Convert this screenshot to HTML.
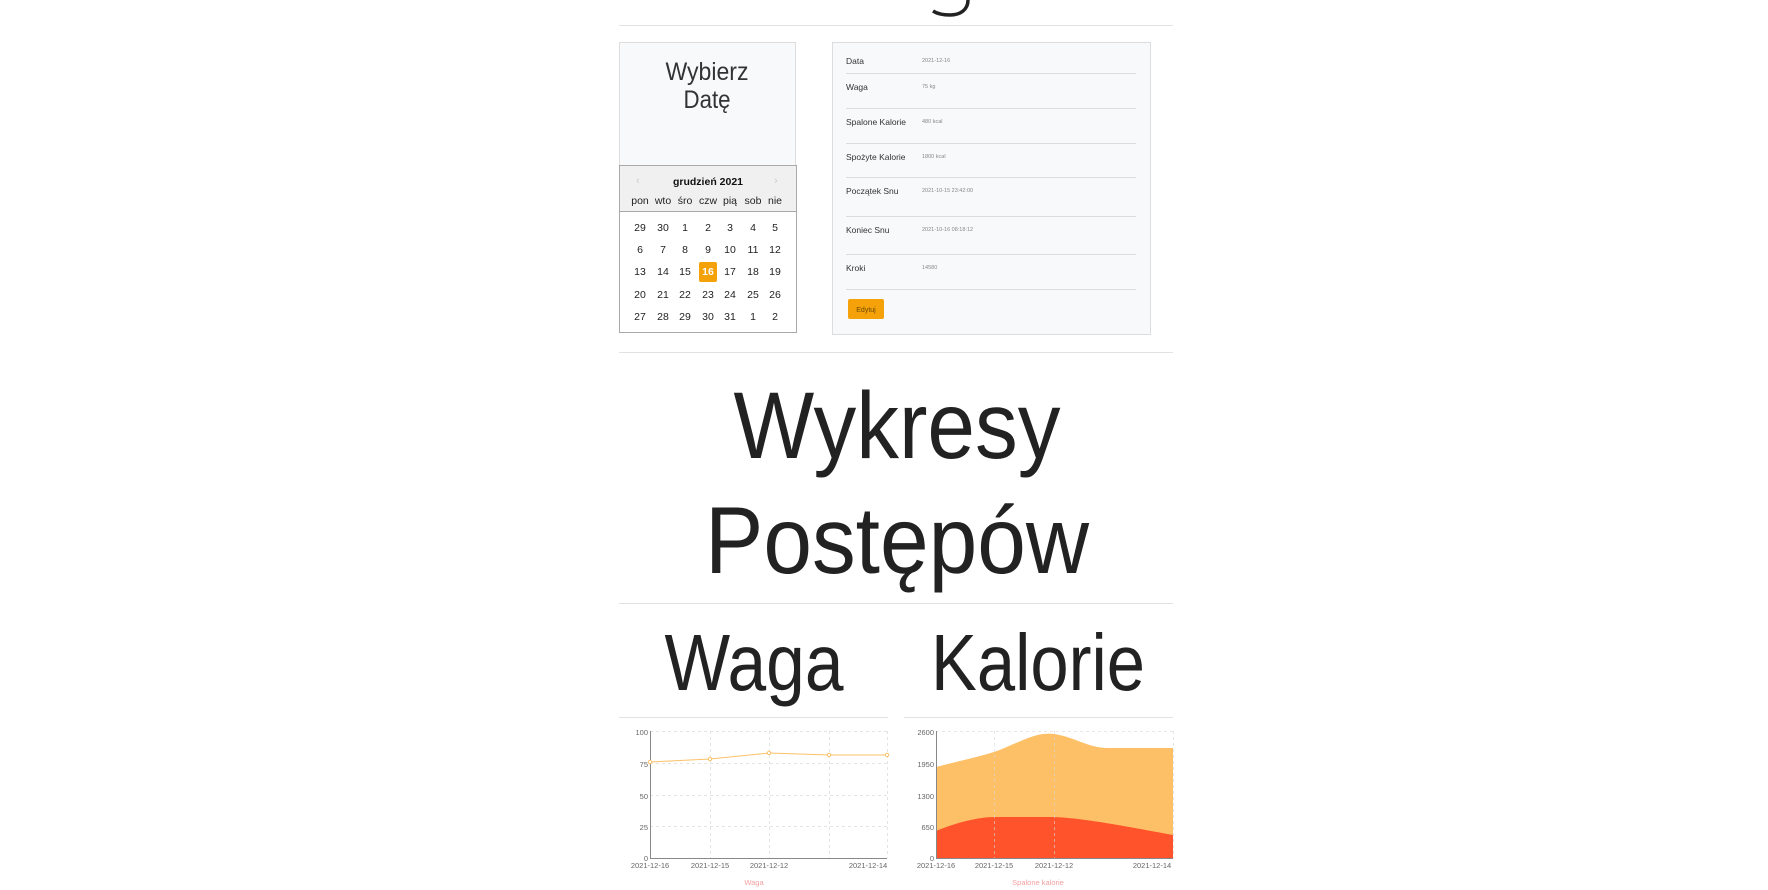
<!DOCTYPE html>
<html><head><meta charset="utf-8"><style>
html,body{margin:0;padding:0;background:#fff;width:1768px;height:890px;overflow:hidden}
svg{display:block}
text{font-family:"Liberation Sans",sans-serif}
</style></head><body>
<svg width="1768" height="890" viewBox="0 0 1768 890" xmlns="http://www.w3.org/2000/svg">
<path d="M968 0 C968 10 960 15 950 15 C942 15 936 13 933 11" fill="none" stroke="#222" stroke-width="3.5"/>
<line x1="619" y1="25.5" x2="1173" y2="25.5" stroke="#e2e2e2"/>

<!-- left picker box -->
<rect x="619.5" y="42.5" width="176" height="123" fill="#f8f9fa" stroke="#ddd"/>
<text x="707" y="80" font-size="25" fill="#333" text-anchor="middle" textLength="83" lengthAdjust="spacingAndGlyphs">Wybierz</text>
<text x="707" y="108" font-size="25" fill="#333" text-anchor="middle" textLength="47" lengthAdjust="spacingAndGlyphs">Datę</text>
<rect x="619.5" y="165.5" width="177" height="167" fill="#fff" stroke="#aaa"/>
<rect x="620" y="166" width="176" height="45" fill="#f0f0f0"/>
<line x1="620" y1="211.5" x2="796" y2="211.5" stroke="#aaa"/>
<text x="636" y="184" font-size="11" fill="#ccc">‹</text>
<text x="774" y="184" font-size="11" fill="#ccc">›</text>
<text x="708" y="185" font-size="10.5" font-weight="bold" fill="#111" text-anchor="middle">grudzień 2021</text>
<g font-size="10.5" fill="#222" text-anchor="middle">
<text x="640" y="204">pon</text><text x="663" y="204">wto</text><text x="685" y="204">śro</text><text x="708" y="204">czw</text><text x="730" y="204">pią</text><text x="753" y="204">sob</text><text x="775" y="204">nie</text>
</g>
<rect x="699" y="262" width="18" height="20" rx="2" fill="#f5a10a"/>
<g font-size="10.5" fill="#222" text-anchor="middle">
<text x="640" y="231">29</text><text x="663" y="231">30</text><text x="685" y="231">1</text><text x="708" y="231">2</text><text x="730" y="231">3</text><text x="753" y="231">4</text><text x="775" y="231">5</text>
<text x="640" y="253">6</text><text x="663" y="253">7</text><text x="685" y="253">8</text><text x="708" y="253">9</text><text x="730" y="253">10</text><text x="753" y="253">11</text><text x="775" y="253">12</text>
<text x="640" y="275">13</text><text x="663" y="275">14</text><text x="685" y="275">15</text><text x="708" y="275" fill="#fff" font-weight="bold">16</text><text x="730" y="275">17</text><text x="753" y="275">18</text><text x="775" y="275">19</text>
<text x="640" y="298">20</text><text x="663" y="298">21</text><text x="685" y="298">22</text><text x="708" y="298">23</text><text x="730" y="298">24</text><text x="753" y="298">25</text><text x="775" y="298">26</text>
<text x="640" y="320">27</text><text x="663" y="320">28</text><text x="685" y="320">29</text><text x="708" y="320">30</text><text x="730" y="320">31</text><text x="753" y="320">1</text><text x="775" y="320">2</text>
</g>

<!-- info card -->
<rect x="832.5" y="42.5" width="318" height="292" fill="#f8f9fa" stroke="#ddd"/>
<g stroke="#ddd"><line x1="846" y1="73.5" x2="1136" y2="73.5"/><line x1="846" y1="108.5" x2="1136" y2="108.5"/><line x1="846" y1="143.5" x2="1136" y2="143.5"/><line x1="846" y1="177.5" x2="1136" y2="177.5"/><line x1="846" y1="216.5" x2="1136" y2="216.5"/><line x1="846" y1="254.5" x2="1136" y2="254.5"/><line x1="846" y1="289.5" x2="1136" y2="289.5"/></g>
<g font-size="8.5" fill="#333">
<text x="846" y="64">Data</text><text x="846" y="90">Waga</text><text x="846" y="125">Spalone Kalorie</text><text x="846" y="160">Spożyte Kalorie</text><text x="846" y="194">Początek Snu</text><text x="846" y="233">Koniec Snu</text><text x="846" y="271">Kroki</text>
</g>
<g font-size="5.5" fill="#888">
<text x="922" y="62">2021-12-16</text><text x="922" y="88">75 kg</text><text x="922" y="123">480 kcal</text><text x="922" y="158">1800 kcal</text><text x="922" y="192">2021-10-15 23:42:00</text><text x="922" y="231">2021-10-16 08:18:12</text><text x="922" y="269">14580</text>
</g>
<rect x="848" y="299" width="36" height="20" rx="2" fill="#f5a10a"/>
<text x="866" y="312" font-size="7" fill="#6b4a00" text-anchor="middle">Edytuj</text>

<line x1="619" y1="352.5" x2="1173" y2="352.5" stroke="#e2e2e2"/>

<text x="897" y="458" font-size="95" fill="#222" text-anchor="middle" textLength="327" lengthAdjust="spacingAndGlyphs">Wykresy</text>
<text x="897" y="573" font-size="95" fill="#222" text-anchor="middle" textLength="384" lengthAdjust="spacingAndGlyphs">Postępów</text>
<line x1="619" y1="603.5" x2="1173" y2="603.5" stroke="#e2e2e2"/>

<text x="754" y="690" font-size="80" fill="#222" text-anchor="middle" textLength="179" lengthAdjust="spacingAndGlyphs">Waga</text>
<text x="1038" y="690" font-size="80" fill="#222" text-anchor="middle" textLength="214" lengthAdjust="spacingAndGlyphs">Kalorie</text>
<line x1="619" y1="717.5" x2="888" y2="717.5" stroke="#e2e2e2"/>
<line x1="904" y1="717.5" x2="1173" y2="717.5" stroke="#e2e2e2"/>

<!-- weight chart -->
<g stroke="#e4e4e4" stroke-dasharray="3,3">
<line x1="650" y1="731.5" x2="887" y2="731.5"/><line x1="650" y1="763.5" x2="887" y2="763.5"/><line x1="650" y1="795.5" x2="887" y2="795.5"/><line x1="650" y1="826.5" x2="887" y2="826.5"/>
<line x1="710.5" y1="731" x2="710.5" y2="858"/><line x1="769.5" y1="731" x2="769.5" y2="858"/><line x1="829.5" y1="731" x2="829.5" y2="858"/><line x1="887.5" y1="731" x2="887.5" y2="858"/>
</g>
<line x1="650.5" y1="731" x2="650.5" y2="858" stroke="#888"/>
<line x1="650" y1="858.5" x2="887" y2="858.5" stroke="#888"/>
<g font-size="7.5" fill="#666" text-anchor="end">
<text x="648" y="735">100</text><text x="648" y="767">75</text><text x="648" y="799">50</text><text x="648" y="830">25</text><text x="648" y="861">0</text>
</g>
<g font-size="7.5" fill="#666" text-anchor="middle">
<text x="650" y="868">2021-12-16</text><text x="710" y="868">2021-12-15</text><text x="769" y="868">2021-12-12</text><text x="868" y="868">2021-12-14</text>
</g>
<polyline points="650,762 710,759 769,753 829,755 887,755" fill="none" stroke="#fbc167" stroke-width="1"/>
<g fill="#fff" stroke="#fbc167"><circle cx="650" cy="762" r="1.7"/><circle cx="710" cy="759" r="1.7"/><circle cx="769" cy="753" r="1.7"/><circle cx="829" cy="755" r="1.7"/><circle cx="887" cy="755" r="1.7"/></g>
<text x="754" y="885" font-size="7.5" fill="#f3a0a0" text-anchor="middle">Waga</text>

<!-- calories chart -->
<path d="M936,767 C955,762 978,757 994,752 C1015,745 1035,731 1054,734 C1075,737 1088,748 1108,748 L1173,748 L1173,858 L936,858 Z" fill="#fdc066"/>
<path d="M936,831 C955,823 978,817 994,817 L1054,817 C1085,818 1140,829 1173,835 L1173,858 L936,858 Z" fill="#ff532b"/>
<g stroke="#d8d8d8" stroke-dasharray="3,3" opacity="0.6">
<line x1="936" y1="731.5" x2="1173" y2="731.5"/><line x1="994.5" y1="731" x2="994.5" y2="858"/><line x1="1054.5" y1="731" x2="1054.5" y2="858"/><line x1="1173.5" y1="731" x2="1173.5" y2="858"/>
</g>
<line x1="936.5" y1="731" x2="936.5" y2="858" stroke="#888"/>
<line x1="936" y1="858.5" x2="1173" y2="858.5" stroke="#888"/>
<g font-size="7.5" fill="#666" text-anchor="end">
<text x="934" y="735">2600</text><text x="934" y="767">1950</text><text x="934" y="799">1300</text><text x="934" y="830">650</text><text x="934" y="861">0</text>
</g>
<g font-size="7.5" fill="#666" text-anchor="middle">
<text x="936" y="868">2021-12-16</text><text x="994" y="868">2021-12-15</text><text x="1054" y="868">2021-12-12</text><text x="1152" y="868">2021-12-14</text>
</g>
<text x="1038" y="885" font-size="7.5" fill="#f3a0a0" text-anchor="middle">Spalone kalorie</text>
</svg>
</body></html>
